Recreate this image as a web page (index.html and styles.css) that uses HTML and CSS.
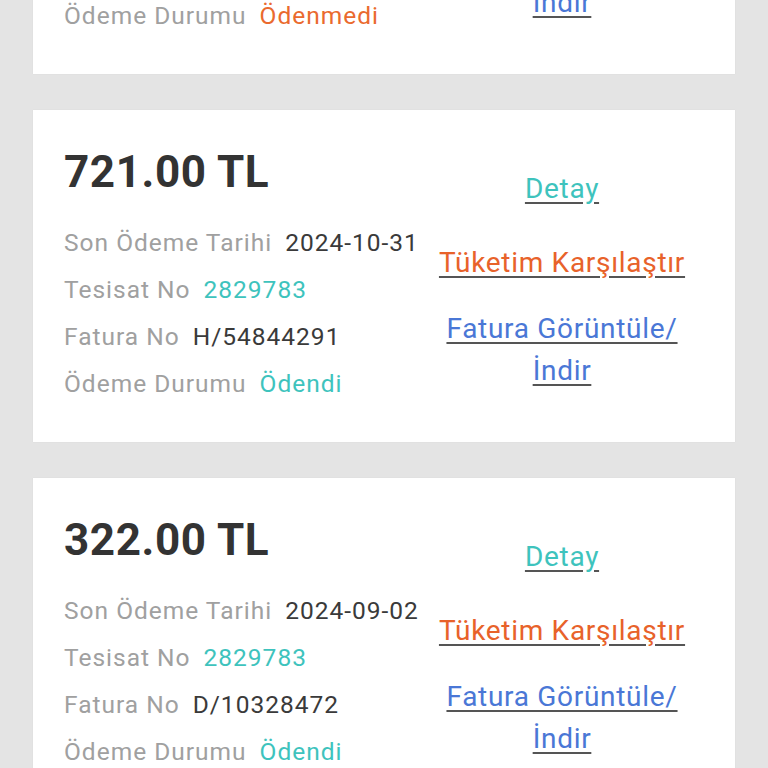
FILE: index.html
```html
<!DOCTYPE html>
<html lang="tr">
<head>
    <meta charset="UTF-8">
    <meta name="viewport" content="width=device-width, initial-scale=1.0">
    <title>Faturalarım</title>
    <link rel="stylesheet" href="styles.css">
</head>
<body>
    <div class="bill-list">
        <!-- previous bill, scrolled mostly out of view -->
        <div class="bill-card">
            <div class="bill-info">
                <div class="amount">548.00 TL</div>
                <div class="row"><span class="label">Son Ödeme Tarihi</span><span class="value">2024-11-29</span></div>
                <div class="row"><span class="label">Tesisat No</span><span class="value teal">2829783</span></div>
                <div class="row"><span class="label">Fatura No</span><span class="value">H/55210388</span></div>
                <div class="row"><span class="label">Ödeme Durumu</span><span class="value orange">Ödenmedi</span></div>
            </div>
            <div class="bill-links">
                <a href="#" class="link detail">Detay</a>
                <a href="#" class="link compare">Tüketim Karşılaştır</a>
                <a href="#" class="link invoice">Fatura Görüntüle/<br>İndir</a>
            </div>
        </div>

        <div class="bill-card">
            <div class="bill-info">
                <div class="amount">721.00 TL</div>
                <div class="row"><span class="label">Son Ödeme Tarihi</span><span class="value">2024-10-31</span></div>
                <div class="row"><span class="label">Tesisat No</span><span class="value teal">2829783</span></div>
                <div class="row"><span class="label">Fatura No</span><span class="value">H/54844291</span></div>
                <div class="row"><span class="label">Ödeme Durumu</span><span class="value teal">Ödendi</span></div>
            </div>
            <div class="bill-links">
                <a href="#" class="link detail">Detay</a>
                <a href="#" class="link compare">Tüketim Karşılaştır</a>
                <a href="#" class="link invoice">Fatura Görüntüle/<br>İndir</a>
            </div>
        </div>

        <div class="bill-card">
            <div class="bill-info">
                <div class="amount">322.00 TL</div>
                <div class="row"><span class="label">Son Ödeme Tarihi</span><span class="value">2024-09-02</span></div>
                <div class="row"><span class="label">Tesisat No</span><span class="value teal">2829783</span></div>
                <div class="row"><span class="label">Fatura No</span><span class="value">D/10328472</span></div>
                <div class="row"><span class="label">Ödeme Durumu</span><span class="value teal">Ödendi</span></div>
            </div>
            <div class="bill-links">
                <a href="#" class="link detail">Detay</a>
                <a href="#" class="link compare">Tüketim Karşılaştır</a>
                <a href="#" class="link invoice">Fatura Görüntüle/<br>İndir</a>
            </div>
        </div>
    </div>
</body>
</html>
```

FILE: styles.css
```css
html, body {
    margin: 0;
    padding: 0;
    height: 768px;
    overflow: hidden;
}

body {
    font-family: Roboto, 'Noto Sans', sans-serif;
    background: #e4e4e4;
    color: #333;
}

.bill-list {
    display: flex;
    flex-direction: column;
    gap: 36px;
    padding: 0 33px;
    margin-top: -258px;
}

.bill-card {
    background: #fff;
    height: 332px;
    box-sizing: border-box;
    padding: 36px 31px 0 31px;
    display: flex;
    box-shadow: 0 0 1px rgba(0, 0, 0, 0.08);
}

.bill-info {
    flex: 1;
    min-width: 0;
}

.amount {
    font-size: 44px;
    font-weight: 700;
    letter-spacing: 0.6px;
    color: #333;
    line-height: 52px;
    margin-bottom: 21px;
}

.row {
    display: flex;
    gap: 13px;
    font-size: 24.5px;
    line-height: 47px;
    letter-spacing: 1px;
    white-space: nowrap;
}

.label {
    color: #a0a0a0;
}

.value {
    color: #3a3a3a;
}

.teal {
    color: #3ec3bd;
}

.orange {
    color: #ea6a2e;
}

.bill-links {
    width: 284px;
    flex-shrink: 0;
    display: flex;
    flex-direction: column;
    align-items: center;
    padding-top: 22px;
}

.link {
    font-size: 28px;
    line-height: 42px;
    letter-spacing: 0.7px;
    text-align: center;
    white-space: nowrap;
    text-decoration: underline;
    text-decoration-color: #555;
    text-underline-offset: 4px;
}

.detail {
    color: #3ec3bd;
    margin-bottom: 32px;
}

.compare {
    color: #e8622a;
    margin-bottom: 24px;
}

.invoice {
    color: #4a77d6;
}
```
